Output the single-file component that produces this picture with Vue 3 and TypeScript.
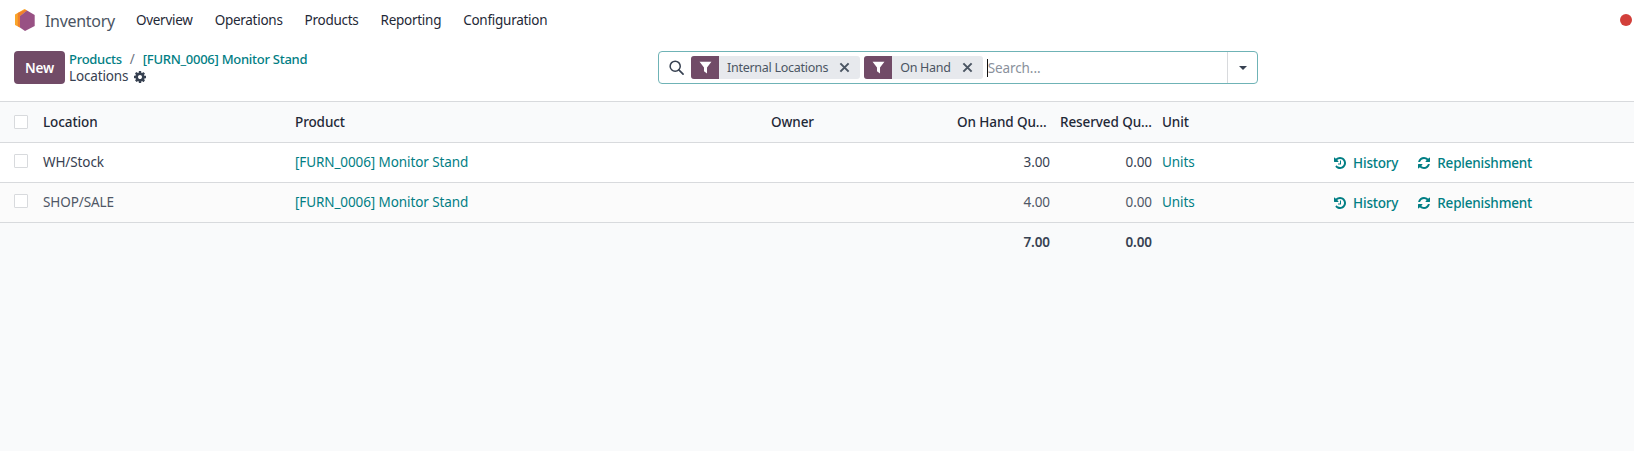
<script setup lang="ts">
const menus: string[] = ['Overview', 'Operations', 'Products', 'Reporting', 'Configuration']
interface Row { location: string; product: string; onHand: string; reserved: string; unit: string }
const rows: Row[] = [
  { location: 'WH/Stock', product: '[FURN_0006] Monitor Stand', onHand: '3.00', reserved: '0.00', unit: 'Units' },
  { location: 'SHOP/SALE', product: '[FURN_0006] Monitor Stand', onHand: '4.00', reserved: '0.00', unit: 'Units' },
]
const facets: string[] = ['Internal Locations', 'On Hand']
const cog = 'M1152 896q0-106-75-181t-181-75-181 75-75 181 75 181 181 75 181-75 75-181zm512-109v222q0 12-8 23t-20 13l-185 28q-19 54-39 91 35 50 107 138 10 12 10 25t-9 23q-27 37-99 108t-94 71q-12 0-26-9l-138-108q-44 23-91 38-16 136-29 186-7 28-36 28h-222q-14 0-24.500-8.500t-11.500-21.500l-28-184q-49-16-90-37l-141 107q-10 9-25 9-14 0-25-11-126-114-165-168-7-10-7-23 0-12 8-23 15-21 51-66.500t54-70.500q-27-50-41-99l-183-27q-13-2-21-12.500t-8-23.500v-222q0-12 8-23t19-13l186-28q14-46 39-92-40-57-107-138-10-12-10-24 0-10 9-23 26-36 98.500-107.500t94.500-71.500q13 0 26 10l138 107q44-23 91-38 16-136 29-186 7-28 36-28h222q14 0 24.500 8.500t11.500 21.500l28 184q49 16 90 37l142-107q9-9 24-9 13 0 25 10 129 119 165 170 7 8 7 22 0 12-8 23-15 21-51 66.500t-54 70.500q26 50 41 98l183 28q13 2 21 12.500t8 23.500z'
const refresh = 'M1639 1056q0 5-1 7-64 268-268 434.500t-478 166.500q-146 0-282.500-55t-243.500-157l-129 129q-19 19-45 19t-45-19-19-45v-448q0-26 19-45t45-19h448q26 0 45 19t19 45-19 45l-137 137q71 66 161 102t187 36q134 0 250-65t186-179q11-17 53-117 8-23 30-23h192q13 0 22.500 9.500t9.500 22.500zm25-800v448q0 26-19 45t-45 19h-448q-26 0-45-19t-19-45 19-45l138-138q-148-137-349-137-134 0-250 65t-186 179q-11 17-53 117-8 23-30 23h-199q-13 0-22.500-9.500t-9.500-22.500v-7q65-268 270-434.500t480-166.500q146 0 284 55.500t245 156.500l130-129q19-19 45-19t45 19 19 45z'
const history = 'M1664 896q0 156-61 298t-164 245-245 164-298 61q-172 0-327-72.500t-264-204.500q-7-10-6.500-22.500t8.500-20.500l137-138q10-9 25-9 16 2 23 12 73 95 179 147t225 52q104 0 198.500-40.500t163.500-109.500 109.500-163.500 40.500-198.500-40.500-198.500-109.500-163.500-163.500-109.500-198.500-40.500q-98 0-188 35.500t-160 101.500l137 138q31 30 14 69-17 40-59 40h-448q-26 0-45-19t-19-45v-448q0-42 40-59 39-17 69 14l130 129q107-101 244.500-156.500t284.500-55.500q156 0 298 61t245 164 164 245 61 298zm-640-288v448q0 14-9 23t-23 9h-320q-14 0-23-9t-9-23v-64q0-14 9-23t23-9h224v-352q0-14 9-23t23-9h64q14 0 23 9t9 23z'
</script>

<template>
  <div class="page">
    <nav class="navbar">
      <svg class="logo" viewBox="0 0 20 23" width="20" height="23">
        <path d="M0 5.500 L9.500 0 L12 1.500 L5 7 V18.500 L0 16 Z" fill="#f9a62b" />
        <path d="M2.800 4 L10.600 0.700 L12 1.500 L5 7 V18.500 L2.800 17.300 Z" fill="#f0802c" />
        <path d="M12 1.500 L19.700 6 V17 L10 22 L5 18.500 V7 Z" fill="#985184" />
      </svg>
      <span class="brand">Inventory</span>
      <a v-for="m in menus" :key="m" class="menu">{{ m }}</a>
      <span class="dot"></span>
    </nav>

    <header class="control">
      <div class="left">
        <button class="new">New</button>
        <div class="crumbs">
          <div class="crumb-top"><a class="crumb">Products</a><span class="sep">/</span><a class="crumb">[FURN_0006] Monitor Stand</a></div>
          <div class="crumb-now">Locations
            <svg class="gear" viewBox="0 0 1792 1792" width="14" height="14"><path :d="cog" fill="#374151" /></svg>
          </div>
        </div>
      </div>
      <div class="search">
        <svg class="mag" viewBox="0 0 16 16" width="15" height="15"><circle cx="6.600" cy="6.600" r="5.400" fill="none" stroke="#374151" stroke-width="1.600" /><path d="M10.500 10.500 L15 15" stroke="#374151" stroke-width="1.800" stroke-linecap="round" /></svg>
        <div v-for="f in facets" :key="f" class="facet">
          <span class="facet-icon"><svg viewBox="0 0 12 12" width="13" height="13"><path d="M0.500 0.800 H11.500 L7.400 6 V11.500 L4.600 9.500 V6 Z" fill="#fff" /></svg></span>
          <span class="facet-text">{{ f }}</span>
          <svg class="facet-x" viewBox="0 0 12 12" width="11" height="11"><path d="M1.500 1.500 L10.500 10.500 M10.500 1.500 L1.500 10.500" stroke="#4b5563" stroke-width="2.200" /></svg>
        </div>
        <span class="input"><i class="cursor"></i>Search...</span>
        <span class="more"><i class="caret"></i></span>
      </div>
    </header>

    <table class="list">
      <colgroup>
        <col class="c0" /><col class="c1" /><col class="c2" /><col class="c3" /><col class="c4" /><col class="c5" /><col class="c6" /><col />
      </colgroup>
      <thead>
        <tr>
          <th><span class="check"></span></th>
          <th>Location</th>
          <th>Product</th>
          <th>Owner</th>
          <th class="num"><span class="trunc">On Hand Quantity</span></th>
          <th class="num"><span class="trunc">Reserved Quantity</span></th>
          <th>Unit</th>
          <th></th>
        </tr>
      </thead>
      <tbody>
        <tr v-for="(r, i) in rows" :key="r.location" :class="{ hover: i === 1 }">
          <td><span class="check up"></span></td>
          <td>{{ r.location }}</td>
          <td><a class="link">{{ r.product }}</a></td>
          <td></td>
          <td class="num">{{ r.onHand }}</td>
          <td class="num">{{ r.reserved }}</td>
          <td><a class="link">{{ r.unit }}</a></td>
          <td class="actions">
            <a class="act"><svg viewBox="0 0 1792 1792" width="14" height="14"><path :d="history" fill="#017e84" /></svg>History</a>
            <a class="act"><svg viewBox="0 0 1792 1792" width="14" height="14"><path :d="refresh" fill="#017e84" /></svg>Replenishment</a>
          </td>
        </tr>
      </tbody>
      <tfoot>
        <tr>
          <td></td><td></td><td></td><td></td>
          <td class="num">7.00</td>
          <td class="num">0.00</td>
          <td></td><td></td>
        </tr>
      </tfoot>
    </table>
  </div>
</template>

<style>
html, body { margin: 0; background: #f9fafb; }
</style>

<style scoped>
.page {
  width: 1634px;
  min-height: 451px;
  background: #f9fafb;
  font-family: "Noto Sans", "Open Sans", sans-serif;
  font-size: 13.5px;
  letter-spacing: -0.1px;
  color: #374151;
}
.navbar {
  height: 40px;
  display: flex;
  align-items: center;
  background: #fff;
  padding: 0 2px 0 15px;
  box-sizing: border-box;
}
.logo { flex: none; margin-right: 10px; }
.brand { font-size: 16px; letter-spacing: -0.3px; color: #4b5563; margin: 2px 21px 0 0; }
.menu { color: #1f2937; margin-right: 22px; letter-spacing: -0.27px; }
.dot {
  margin-left: auto;
  width: 12px;
  height: 12px;
  border-radius: 50%;
  background: #d23f3a;
}
.control {
  height: 61px;
  background: #fff;
  border-bottom: 1px solid #d8dadd;
  display: grid;
  grid-template-columns: 658px 600px;
}
.left { display: flex; padding: 11px 0 0 14px; gap: 4px; align-items: flex-start; }
.new {
  width: 51px;
  height: 33px;
  border: 0;
  border-radius: 4px;
  background: #714b67;
  color: #fff;
  font: 600 13.5px "Noto Sans", sans-serif;
  letter-spacing: -0.1px;
  padding: 0;
}
.crumbs { line-height: 17px; }
.crumb-top { white-space: nowrap; }
.crumb { color: #017e84; font-weight: 500; font-size: 13px; letter-spacing: -0.27px; }
.sep { margin: 0 8px; color: #6b7280; }
.crumb-now { display: flex; align-items: center; gap: 5px; letter-spacing: -0.15px; }
.search {
  margin-top: 11px;
  height: 33px;
  box-sizing: border-box;
  border: 1px solid #6fb3b6;
  border-radius: 4px;
  background: #fff;
  display: flex;
  align-items: center;
  padding-left: 10px;
  width: 600px;
}
.mag { flex: none; margin-right: 7px; }
.facet {
  height: 23px;
  display: flex;
  align-items: center;
  background: #e7e9ed;
  border-radius: 3px;
  margin-right: 4px;
}
.facet-icon {
  width: 28px;
  height: 23px;
  background: #714b67;
  border-radius: 3px 0 0 3px;
  display: flex;
  align-items: center;
  justify-content: center;
}
.facet-text { margin: 0 11px 0 8px; color: #4b5563; font-size: 12.5px; letter-spacing: -0.27px; }
.facet-x { margin-right: 10px; }
.input { flex: 1; color: #8a919c; display: flex; align-items: center; }
.cursor { width: 1px; height: 18px; background: #111; }
.more {
  width: 29px;
  height: 31px;
  border-left: 1px solid #d8dadd;
  display: flex;
  align-items: center;
  justify-content: center;
}
.caret {
  border-left: 4px solid transparent;
  border-right: 4px solid transparent;
  border-top: 4px solid #374151;
}
.list {
  width: 1634px;
  table-layout: fixed;
  border-collapse: collapse;
}
.c0 { width: 38px; }
.c1 { width: 252px; }
.c2 { width: 476px; }
.c3 { width: 186px; }
.c4 { width: 103px; }
.c5 { width: 102px; }
.c6 { width: 60px; }
th, td {
  height: 40px;
  padding: 0 5px;
  box-sizing: border-box;
  text-align: left;
  border-bottom: 1px solid #d8dadd;
}
th { font-weight: 500; color: #1f2937; }
th:first-child, td:first-child { padding-left: 14px; padding-right: 0; }
tbody tr { background: #fff; color: #374151; }
tbody tr.hover { background: #fbfbfb; color: #4f5766; }
tfoot td { border-bottom: 0; font-weight: 600; height: 40px; }
.num { text-align: right; }
.trunc {
  display: block;
  overflow: hidden;
  text-overflow: ellipsis;
  white-space: nowrap;
}
.check {
  display: block;
  width: 14px;
  height: 14px;
  box-sizing: border-box;
  border: 1px solid #d8dadd;
  border-radius: 1px;
  background: #fff;
}
.check.up { margin-top: -2px; }
.link { color: #017e84; }
.actions { text-align: right; padding-right: 102px; white-space: nowrap; }
.act {
  display: inline-flex;
  align-items: center;
  gap: 6px;
  color: #017e84;
  font-weight: 500;
  letter-spacing: -0.2px;
  margin-left: 19px;
  position: relative;
  top: 2px;
}
</style>
